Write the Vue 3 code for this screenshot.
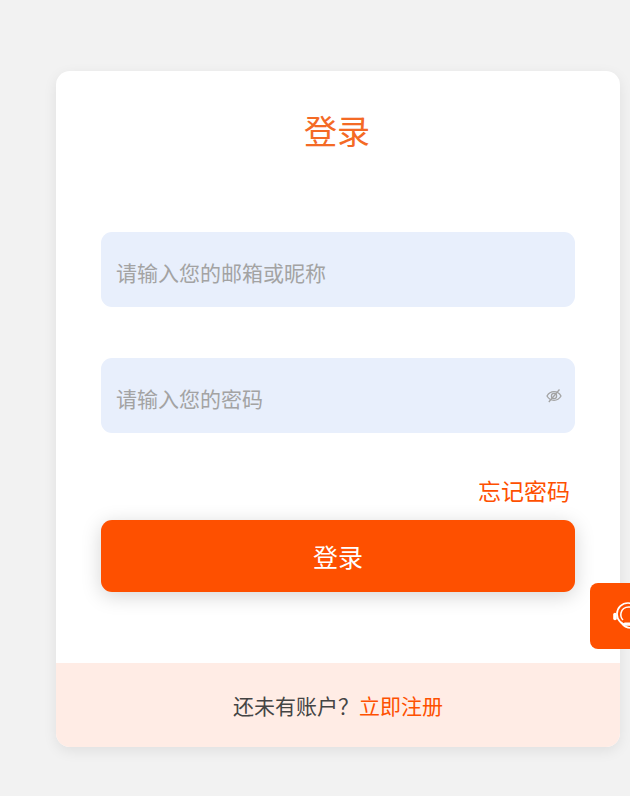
<template>
  <div class="page">
    <div class="card">
      <form class="form" @submit.prevent>
        <h1 class="title">登录</h1>
        <div class="field">
          <input v-model="account" type="text" placeholder="请输入您的邮箱或昵称" />
        </div>
        <div class="field field-password">
          <input v-model="password" type="password" placeholder="请输入您的密码" />
          <svg class="eye" viewBox="0 0 16 16" width="16" height="16" fill="none" stroke="#a3a3a3" stroke-width="1.300">
            <path d="M1 8c1.700-2.900 4-4.300 7-4.300s5.300 1.400 7 4.300c-1.700 2.900-4 4.300-7 4.300S2.700 10.900 1 8z" />
            <circle cx="8" cy="8" r="2.600" />
            <path d="M13.500 1.500 2.800 14" />
          </svg>
        </div>
        <div class="forgot-row">
          <a class="forgot">忘记密码</a>
        </div>
        <button class="submit" type="submit">登录</button>
      </form>
      <div class="footer">
        还未有账户？<a class="register">立即注册</a>
      </div>
    </div>
    <div class="support">
      <svg viewBox="0 0 34 34" width="34" height="34" fill="none" stroke="#fff" stroke-width="1.700">
        <circle cx="16" cy="15" r="11" />
        <path d="M11 21c-2-2-2.500-4.500-2-7 .8-3.500 4-6 8-6 3.500 0 6 2 7 5" stroke-width="1.500" />
        <path d="M3 15.500v4" stroke-width="3.600" stroke-linecap="round" />
        <path d="M9 23.500c2.500 3.500 6 5.500 10 5.500" stroke-linecap="round" />
        <path d="M13 24.500h6" stroke-width="2.200" stroke-linecap="round" />
      </svg>
    </div>
  </div>
</template>

<script setup>
import { ref } from "vue";

const account = ref("");
const password = ref("");
</script>

<style>
html,
body {
  margin: 0;
  height: 100%;
  overflow: hidden;
  background: #f2f2f2;
}
</style>

<style scoped>
.page {
  box-sizing: border-box;
  height: 796px;
  padding: 71px 0 0 56px;
  font-family: "Noto Sans CJK SC", "Liberation Sans", sans-serif;
}

.card {
  width: 564px;
  height: 676px;
  display: flex;
  flex-direction: column;
  background: #fff;
  border-radius: 14px;
  box-shadow: 0 4px 14px rgba(0, 0, 0, 0.08);
  overflow: hidden;
}

.form {
  flex: 1;
  padding: 0 45px;
}

.title {
  margin: 37px 2px 79px 0;
  height: 45px;
  font-size: 33px;
  line-height: 45px;
  font-weight: 400;
  text-align: center;
  color: #f46a25;
}

.field {
  position: relative;
  height: 75px;
  margin-bottom: 51px;
}

.field input {
  box-sizing: border-box;
  width: 100%;
  height: 100%;
  padding: 4px 15px 0;
  border: none;
  outline: none;
  border-radius: 11px;
  background: #e8effc;
  font-family: inherit;
  font-size: 21px;
  color: #333;
}

.field input::placeholder {
  color: #a3a3a3;
}

.eye {
  position: absolute;
  right: 13px;
  top: 30px;
}

.forgot-row {
  display: flex;
  justify-content: flex-end;
  margin-top: -9px;
  padding-right: 5px;
  height: 45px;
}

.forgot {
  font-size: 23px;
  line-height: 30px;
  color: #fe5000;
}

.submit {
  display: block;
  width: 100%;
  height: 71.500px;
  border: none;
  border-radius: 11px;
  background: #fe5000;
  box-shadow: 0 4px 20px rgba(0, 0, 0, 0.17);
  font-family: inherit;
  font-size: 25px;
  color: #fff;
  cursor: pointer;
}

.footer {
  height: 84px;
  display: flex;
  align-items: center;
  justify-content: center;
  background: #ffece5;
  font-size: 21px;
  color: #444;
}

.register {
  color: #fe5000;
}

.support {
  position: fixed;
  left: 590px;
  top: 583px;
  width: 60px;
  height: 66px;
  display: flex;
  align-items: center;
  padding-left: 22px;
  box-sizing: border-box;
  background: #fe5000;
  border-radius: 8px;
}
</style>
